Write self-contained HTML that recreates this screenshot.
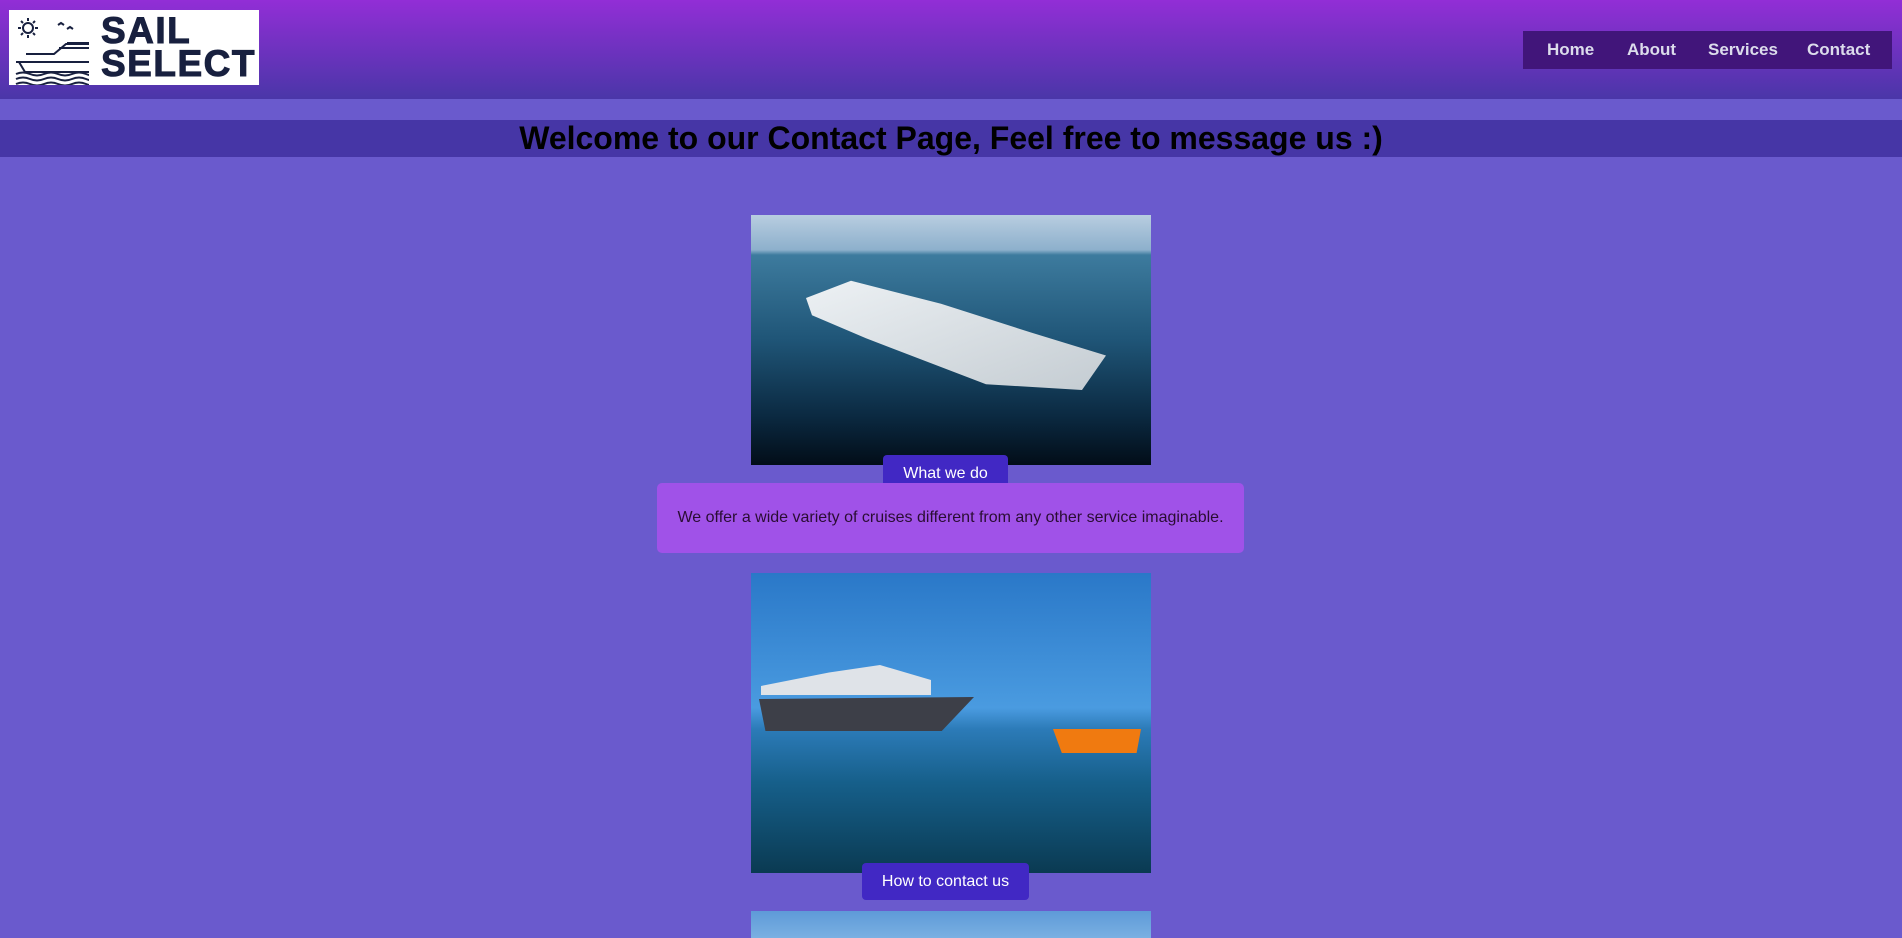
<!DOCTYPE html>
<html><head><meta charset="utf-8"><style>
*{margin:0;padding:0;box-sizing:border-box}
body{width:1902px;height:938px;overflow:hidden;background:#6a5acd;font-family:"Liberation Sans",Arial,sans-serif;position:relative}
header{position:absolute;left:0;top:0;width:1902px;height:99px;background:linear-gradient(#922ed6,#4a36a8)}
.logo{position:absolute;left:9px;top:10px;width:250px;height:75px;background:#fff}
.logo .t{position:absolute;left:92px;top:4px;font-weight:900;font-size:37px;line-height:33px;color:#18203f;letter-spacing:1.5px;-webkit-text-stroke:1px #18203f}
nav{position:absolute;left:1523px;top:31px;width:369px;height:38px;background:#41157a}
nav span{color:#dcdcec;font-weight:bold;font-size:17px;position:absolute;top:9px}
.band{position:absolute;left:0;top:120px;width:1902px;height:37px;background:#4636a6;text-align:center;font-weight:bold;font-size:32px;line-height:37px;color:#000}
.img{position:absolute;left:751px;width:400px;overflow:hidden}
.btn{position:absolute;background:#4128c4;color:#fff;font-size:16px;text-align:center;border-radius:4px}
.box{position:absolute;left:657px;top:483px;width:587px;height:70px;background:#a052e8;border-radius:5px;text-align:center;line-height:70px;font-size:16px;color:#2a0d33}
</style></head><body>
<header>
<div class="logo">
<svg width="80" height="75" style="position:absolute;left:0;top:0" fill="none" stroke="#18203f" stroke-width="2">
<circle cx="19" cy="18" r="5"/>
<path d="M19 8v3M19 25v3M9 18h3M26 18h3M12 11l2 2M24 23l2 2M12 25l2-2M24 13l2-2"/>
<path d="M49 15l3-2 3 2M58 19l3-2 3 2"/>
<path d="M17 44h28l12-10h30M50 38h35M58 33h25M7 52h80M10 52l6 10h66"/>
<path d="M7 64q7-3 14 0t14 0 14 0 14 0 14 0 14 0M7 69q7-3 14 0t14 0 14 0 14 0 14 0 14 0M7 74q7-3 14 0t14 0 14 0 14 0 14 0 14 0"/>
</svg>
<div class="t">SAIL<br>SELECT</div>
</div>
<nav><span style="left:24px">Home</span><span style="left:104px">About</span><span style="left:185px">Services</span><span style="left:284px">Contact</span></nav>
</header>
<div class="band">Welcome to our Contact Page, Feel free to message us :)</div>
<div class="img" style="top:215px;height:250px;background:linear-gradient(#b8cde0 0%,#8db0cc 14%,#3d7b9e 16%,#1f5577 50%,#0b2a42 80%,#020d18 100%)">
<div style="position:absolute;left:55px;top:60px;width:300px;height:115px;background:linear-gradient(160deg,#eef2f5,#c4ccd2);clip-path:polygon(0 20%,15% 5%,45% 25%,75% 50%,100% 70%,92% 100%,60% 95%,20% 55%,2% 35%)"></div>
</div>
<div class="btn" style="left:883px;top:455px;width:125px;height:37px;line-height:37px">What we do</div>
<div class="box">We offer a wide variety of cruises different from any other service imaginable.</div>
<div class="img" style="top:573px;height:300px;background:linear-gradient(#2a78c8 0%,#4a9be0 45%,#2c7bb8 52%,#165f8a 70%,#0a3a52 100%)">
<div style="position:absolute;left:8px;top:118px;width:215px;height:40px;background:#3d3f48;clip-path:polygon(0 20%,100% 15%,85% 100%,3% 100%)"></div>
<div style="position:absolute;left:10px;top:92px;width:170px;height:30px;background:#dfe3e8;clip-path:polygon(0 70%,40% 25%,70% 0,100% 50%,100% 100%,0 100%)"></div>
<div style="position:absolute;left:302px;top:150px;width:88px;height:30px;background:#f07a10;clip-path:polygon(0 20%,100% 20%,95% 100%,10% 100%)"></div>
</div>
<div class="btn" style="left:862px;top:863px;width:167px;height:37px;line-height:37px">How to contact us</div>
<div class="img" style="top:911px;height:27px;background:linear-gradient(#5e9ad8,#7ab0e2)"></div>
</body></html>
